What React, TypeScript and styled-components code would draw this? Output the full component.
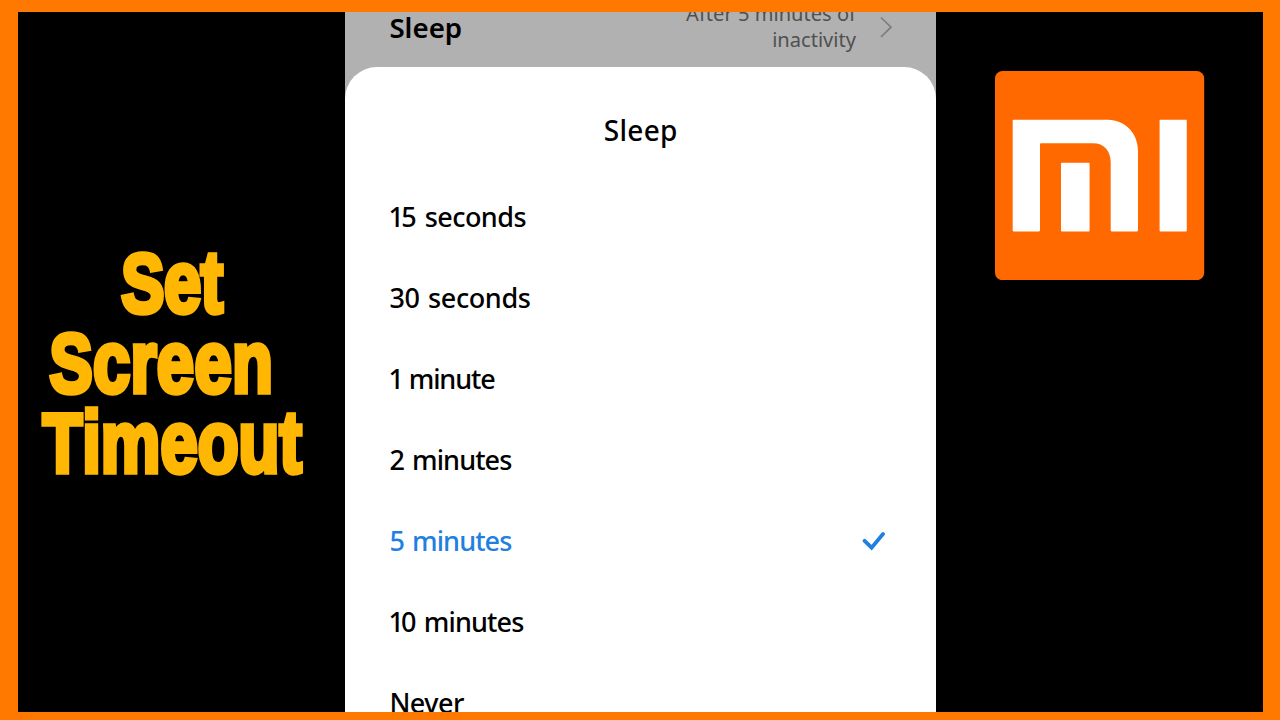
import React from "react";
import styled, { createGlobalStyle, css } from "styled-components";

const ORANGE = "#ff7800";

const GlobalStyle = createGlobalStyle`
  body { margin: 0; background: #000; }
  * { box-sizing: border-box; }
`;

const Frame = styled.div`
  width: 1280px;
  height: 720px;
  padding: 12px 17px 8px 18px;
  background: ${ORANGE};
  overflow: hidden;
`;

const Stage = styled.main`
  display: grid;
  grid-template-columns: 327.4px 590.6px 1fr;
  height: 700px;
  background: #000;
`;

const Headline = styled.h1`
  display: flex;
  flex-direction: column;
  align-items: center;
  justify-content: center;
  margin: 0;
  padding-right: 19px;
  min-width: 0;
  color: #ffb703;
`;

const HeadlineLine = styled.span<{ $tracking?: number; $nudge?: number }>`
  display: block;
  height: 80px;
  margin-right: ${(p) => p.$nudge ?? 0}px;
  font: 700 87px/80px "Liberation Sans", Arial, sans-serif;
  letter-spacing: ${(p) => p.$tracking ?? 0}px;
  white-space: nowrap;
  transform: scaleX(0.77);
  -webkit-text-stroke: 5.4px currentColor;

  &::first-letter {
    font-size: 84px;
  }
`;

const Phone = styled.section`
  display: flex;
  flex-direction: column;
  height: 700px;
  overflow: hidden;
  background: #b1b1b1;
  font-family: "Noto Sans", "Open Sans", sans-serif;
`;

const SettingRow = styled.div`
  display: flex;
  align-items: center;
  flex: none;
  height: 55px;
  padding: 0 43px 0 44px;
`;

const SettingName = styled.span`
  flex: 1;
  padding-bottom: 26px;
  font-size: 27.7px;
  font-weight: 600;
  line-height: 30px;
  color: #000;
`;

const SettingValue = styled.span`
  width: 190px;
  margin-right: 23px;
  padding-bottom: 26px;
  font-size: 20.1px;
  line-height: 26px;
  text-align: right;
  color: #505050;
`;

const Chevron = styled.svg`
  flex: none;
  width: 14px;
  height: 22px;
  margin-bottom: 25px;
`;

const Sheet = styled.div`
  flex: 1;
  background: #fff;
  border-radius: 32px 32px 0 0;
`;

const SheetTitle = styled.h2`
  margin: 0;
  padding-top: 43px;
  height: 109px;
  font-size: 28px;
  font-weight: 500;
  line-height: 40px;
  letter-spacing: 0.3px;
  text-align: center;
  color: #000;
`;

const Options = styled.ul`
  margin: 0;
  padding: 0;
  list-style: none;
`;

const Option = styled.li<{ $selected?: boolean }>`
  display: flex;
  align-items: center;
  justify-content: space-between;
  height: 81px;
  padding: 0 50px 0 44px;
  color: ${(p) => (p.$selected ? "#1f80e0" : "#000")};
`;

const OptionLabel = styled.span<{ $tracking: number; $thinOne: boolean }>`
  display: block;
  font-size: 27px;
  font-weight: 500;
  line-height: 40px;
  white-space: nowrap;
  letter-spacing: ${(p) => p.$tracking}px;
  word-spacing: 2px;

  ${(p) =>
    p.$thinOne &&
    css`
      &::first-letter {
        margin-left: -1px;
        margin-right: -2px;
      }
    `}
`;

const CheckMark = styled.svg`
  width: 24px;
  height: 20px;
`;

const Brand = styled.aside`
  display: flex;
  justify-content: flex-start;
  padding: 59.3px 0 0 59.5px;
`;

const Logo = styled.svg`
  width: 209.2px;
  height: 209.2px;
`;

const options = [
  { label: "15 seconds", tracking: -0.55 },
  { label: "30 seconds", tracking: -0.4 },
  { label: "1 minute", tracking: -1.1 },
  { label: "2 minutes", tracking: -0.9 },
  { label: "5 minutes", tracking: -0.9, selected: true },
  { label: "10 minutes", tracking: -0.85 },
  { label: "Never", tracking: -0.5 },
];

export default function App() {
  return (
    <>
      <GlobalStyle />
      <Frame>
        <Stage>
          <Headline>
            <HeadlineLine $tracking={-0.5}>Set</HeadlineLine>
            <HeadlineLine $tracking={0.4} $nudge={22}>Screen</HeadlineLine>
            <HeadlineLine>Timeout</HeadlineLine>
          </Headline>

          <Phone>
            <SettingRow>
              <SettingName>Sleep</SettingName>
              <SettingValue>After 5 minutes of inactivity</SettingValue>
              <Chevron viewBox="0 0 14 22" fill="none" stroke="#7d7d7d" strokeWidth="1.7">
                <path d="M2 1.5 L12 11.2 L2 21" />
              </Chevron>
            </SettingRow>
            <Sheet>
              <SheetTitle>Sleep</SheetTitle>
              <Options>
                {options.map((o) => (
                  <Option key={o.label} $selected={o.selected}>
                    <OptionLabel $tracking={o.tracking} $thinOne={o.label.startsWith("1")}>
                      {o.label}
                    </OptionLabel>
                    {o.selected && (
                      <CheckMark viewBox="0 0 24 20" fill="none" stroke="currentColor" strokeWidth="3.8" strokeLinecap="round">
                        <path d="M2.6 9.8 L9.6 16.7 L21 3" />
                      </CheckMark>
                    )}
                  </Option>
                ))}
              </Options>
            </Sheet>
          </Phone>

          <Brand>
            <Logo viewBox="0 0 209.2 209.2">
              <rect width="209.2" height="209.2" rx="7.5" fill="#ff6900" />
              <g fill="#fff">
                <path d="M18.7 48.7 H113 C130 49 143 62 143 80 V159.3 Q143 160.4 142 160.4 H116.7 Q115.7 160.4 115.7 159.3 V91 C115.7 80 109 72.3 98 72.3 H46 Q45 72.3 45 73.3 V159.3 Q45 160.4 44 160.4 H18.7 Q17.7 160.4 17.7 159.3 V49.7 Q17.7 48.7 18.7 48.7 Z" />
                <rect x="66" y="91.7" width="28.6" height="68.7" rx="1" />
                <rect x="164.6" y="48.7" width="27.2" height="111.7" rx="1" />
              </g>
            </Logo>
          </Brand>
        </Stage>
      </Frame>
    </>
  );
}
